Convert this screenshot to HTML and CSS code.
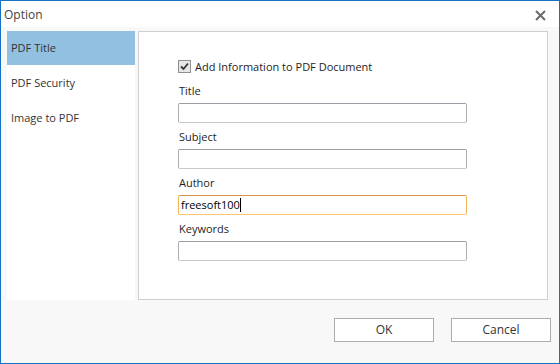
FILE: index.html
```html
<!DOCTYPE html>
<html lang="en">
<head>
  <meta charset="UTF-8">
  <title>Option</title>
  <link rel="stylesheet" href="styles.css">
</head>
<body>
  <div class="window">
    <div class="title-bar">
      <span class="title">Option</span>
      <span class="close">
        <svg width="11" height="11" viewBox="0 0 11 11"><path d="M1 1 L10 10 M10 1 L1 10" stroke="#6b6b6b" stroke-width="2"/></svg>
      </span>
    </div>

    <div class="main">
      <div class="nav">
        <div class="nav-item active">PDF Title</div>
        <div class="nav-item">PDF Security</div>
        <div class="nav-item">Image to PDF</div>
      </div>

      <div class="panel">
        <label class="check-row">
          <span class="checkbox">
            <svg width="9" height="9" viewBox="0 0 9 9"><path d="M1 4.5 L3.5 7 L8 1.5" fill="none" stroke="#333" stroke-width="1.8"/></svg>
          </span>
          Add Information to PDF Document
        </label>

        <div class="field first">
          <div class="label">Title</div>
          <div class="input"></div>
        </div>
        <div class="field">
          <div class="label">Subject</div>
          <div class="input"></div>
        </div>
        <div class="field">
          <div class="label">Author</div>
          <div class="input focused">freesoft100<span class="caret"></span></div>
        </div>
        <div class="field">
          <div class="label">Keywords</div>
          <div class="input"></div>
        </div>
      </div>
    </div>

    <div class="footer">
      <div class="btn">OK</div>
      <div class="btn">Cancel</div>
    </div>
  </div>
</body>
</html>
```

FILE: styles.css
```css
html, body {
  margin: 0; padding: 0;
  font-family: 'Open Sans', 'Noto Sans', sans-serif;
  font-size: 11px;
  color: #1e1e1e;
}
.window {
  width: 560px; height: 364px;
  box-sizing: border-box;
  border: 1px solid #1672c6;
  background: #f8f8f8;
  display: flex;
  flex-direction: column;
}
.title-bar {
  height: 26px;
  background: #fff;
  display: flex;
  align-items: center;
  justify-content: space-between;
  padding: 0 13px 0 3px;
}
.title-bar .title {
  font-size: 12px;
  color: #444;
}
.title-bar .close {
  display: flex;
  margin-top: 2px;
}
.main {
  display: flex;
  gap: 3px;
  padding: 4px 11px 0 6px;
  height: 269px;
}
.nav {
  width: 128px;
  background: #fff;
}
.nav-item {
  height: 35px;
  line-height: 35px;
  padding-left: 4px;
  color: #333;
}
.nav-item.active {
  background: #92c0e1;
  height: 34px;
  line-height: 34px;
}
.panel {
  flex: 1;
  background: #fff;
  border: 1px solid #cfcfcf;
  padding: 27px 0 0 39px;
}
.check-row {
  display: flex;
  align-items: center;
  gap: 4px;
  height: 14px;
  color: #1e1e1e;
}
.checkbox {
  width: 11px; height: 11px;
  border: 1px solid #8f8f8f;
  background: #e6e6e6;
  display: flex;
  align-items: center;
  justify-content: center;
}
.field {
  margin-top: 6px;
}
.field.first {
  margin-top: 10px;
}
.label {
  height: 16px;
  line-height: 16px;
  padding-left: 1px;
  margin-bottom: 4px;
}
.input {
  width: 289px; height: 20px;
  box-sizing: border-box;
  border: 1px solid #abadb3;
  border-top-color: #9a9da4;
  border-bottom-color: #c6c8cd;
  border-radius: 2px;
  background: #fff;
  line-height: 18px;
  padding-left: 2px;
  color: #000;
  display: flex;
  align-items: center;
}
.input.focused {
  border-color: #f2b55c;
  border-top-color: #d5964a;
  border-bottom-color: #ffc56a;
}
.caret {
  display: inline-block;
  width: 1px; height: 14px;
  background: #000;
}
.footer {
  flex: 1;
  display: flex;
  justify-content: flex-end;
  gap: 17px;
  padding: 18px 8px 0 0;
}
.btn {
  width: 100px; height: 24px;
  box-sizing: border-box;
  border: 1px solid #adadad;
  background: #fff;
  text-align: center;
  line-height: 22px;
  font-size: 12px;
  color: #333;
}
```
